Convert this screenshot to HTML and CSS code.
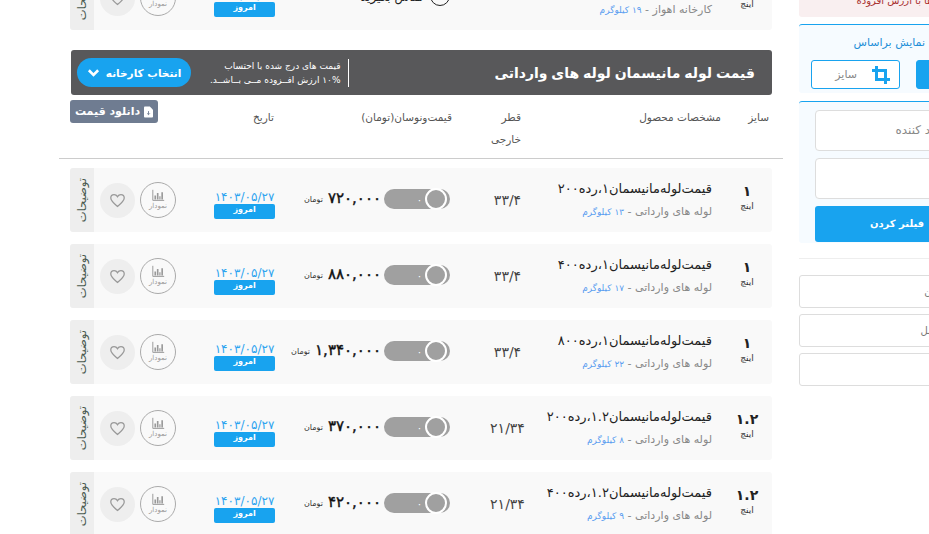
FILE: index.html
```html
<!DOCTYPE html>
<html lang="fa">
<head>
  <meta charset="UTF-8">
  <meta name="viewport" content="width=device-width, initial-scale=1.0">
  <title>قیمت لوله مانیسمان</title>
  <link rel="stylesheet" href="styles.css">
</head>
<body>

<svg class="defs" width="0" height="0">
  <symbol id="bars" viewBox="0 0 16 16">
    <path d="M1 1v13h14" fill="none" stroke="currentColor" stroke-width="1.2"/>
    <path d="M3 8h2v5H3zM6 5h2v8H6zM9 9h1.500v4H9zM11.500 4h2v9h-2z" fill="currentColor"/>
  </symbol>
  <symbol id="heart" viewBox="0 0 24 24">
    <path d="M12 20.500C6 15.500 2.500 12.300 2.500 8.500 2.500 5.700 4.600 3.700 7.200 3.700c1.900 0 3.700 1 4.800 2.900 1.100-1.900 2.900-2.900 4.800-2.900 2.600 0 4.700 2 4.700 4.800 0 3.800-3.500 7-9.500 12z" fill="none" stroke="currentColor" stroke-width="1.800"/>
  </symbol>
</svg>

<div class="page">
  <main class="main">

    <div class="row">
      <div class="size"><b>۲</b><small>اینچ</small></div>
      <div class="product"><h3>قیمت لوله مانیسمان ۲، رده ۸۰</h3><p>کارخانه اهواز - <span>۱۹ کیلوگرم</span></p></div>
      <div class="diameter"></div>
      <div class="price-cell"><span class="status-icon"></span><span class="status">تماس بگیرید</span></div>
      <div class="date"><span>۱۴۰۳/۰۵/۲۷</span><em>امروز</em></div>
      <div class="chart"><svg><use href="#bars"/></svg><small>نمودار</small></div>
      <div class="like"><svg><use href="#heart"/></svg></div>
      <div class="notes"><span>توضیحات</span></div>
    </div>

    <section class="banner">
      <h2>قیمت لوله مانیسمان لوله های وارداتی</h2>
      <p>قیمت های درج شده با احتساب<br>۱۰% ارزش افــزوده مــی بــاشــد.</p>
      <button class="pick" type="button">انتخاب کارخانه
        <svg viewBox="0 0 14 10"><path d="M2 2l5 5 5-5" fill="none" stroke="currentColor" stroke-width="2.800"/></svg>
      </button>
    </section>

    <div class="table-head">
      <div class="head-size">سایز</div>
      <div class="head-product">مشخصات محصول</div>
      <div class="head-diameter">قطر<br>خارجی</div>
      <div class="head-price">قیمت‌ونوسان(تومان)</div>
      <div class="head-date">تاریخ</div>
      <button class="download" type="button">
        <svg viewBox="0 0 10 12"><path d="M0 1a1 1 0 0 1 1-1h5.500L10 3.500V11a1 1 0 0 1-1 1H1a1 1 0 0 1-1-1z" fill="#fff"/><path d="M5 5v4M3.500 7.500L5 9l1.500-1.500" fill="none" stroke="#6f7c91"/></svg>
        <span>دانلود قیمت</span>
      </button>
    </div>

    <div class="row">
      <div class="size"><b>۱</b><small>اینچ</small></div>
      <div class="product"><h3>قیمت‌لوله‌مانیسمان۱،رده۲۰۰</h3><p>لوله های وارداتی - <span>۱۳ کیلوگرم</span></p></div>
      <div class="diameter">۳۳/۴</div>
      <div class="price-cell"><div class="toggle"><i>۰</i></div><strong>۷۲۰,۰۰۰</strong><small>تومان</small></div>
      <div class="date"><span>۱۴۰۳/۰۵/۲۷</span><em>امروز</em></div>
      <div class="chart"><svg><use href="#bars"/></svg><small>نمودار</small></div>
      <div class="like"><svg><use href="#heart"/></svg></div>
      <div class="notes"><span>توضیحات</span></div>
    </div>

    <div class="row">
      <div class="size"><b>۱</b><small>اینچ</small></div>
      <div class="product"><h3>قیمت‌لوله‌مانیسمان۱،رده۴۰۰</h3><p>لوله های وارداتی - <span>۱۷ کیلوگرم</span></p></div>
      <div class="diameter">۳۳/۴</div>
      <div class="price-cell"><div class="toggle"><i>۰</i></div><strong>۸۸۰,۰۰۰</strong><small>تومان</small></div>
      <div class="date"><span>۱۴۰۳/۰۵/۲۷</span><em>امروز</em></div>
      <div class="chart"><svg><use href="#bars"/></svg><small>نمودار</small></div>
      <div class="like"><svg><use href="#heart"/></svg></div>
      <div class="notes"><span>توضیحات</span></div>
    </div>

    <div class="row">
      <div class="size"><b>۱</b><small>اینچ</small></div>
      <div class="product"><h3>قیمت‌لوله‌مانیسمان۱،رده۸۰۰</h3><p>لوله های وارداتی - <span>۲۲ کیلوگرم</span></p></div>
      <div class="diameter">۳۳/۴</div>
      <div class="price-cell"><div class="toggle"><i>۰</i></div><strong>۱,۳۴۰,۰۰۰</strong><small>تومان</small></div>
      <div class="date"><span>۱۴۰۳/۰۵/۲۷</span><em>امروز</em></div>
      <div class="chart"><svg><use href="#bars"/></svg><small>نمودار</small></div>
      <div class="like"><svg><use href="#heart"/></svg></div>
      <div class="notes"><span>توضیحات</span></div>
    </div>

    <div class="row">
      <div class="size"><b>۱.۲</b><small>اینچ</small></div>
      <div class="product"><h3>قیمت‌لوله‌مانیسمان۱.۲،رده۲۰۰</h3><p>لوله های وارداتی - <span>۸ کیلوگرم</span></p></div>
      <div class="diameter">۲۱/۳۴</div>
      <div class="price-cell"><div class="toggle"><i>۰</i></div><strong>۳۷۰,۰۰۰</strong><small>تومان</small></div>
      <div class="date"><span>۱۴۰۳/۰۵/۲۷</span><em>امروز</em></div>
      <div class="chart"><svg><use href="#bars"/></svg><small>نمودار</small></div>
      <div class="like"><svg><use href="#heart"/></svg></div>
      <div class="notes"><span>توضیحات</span></div>
    </div>

    <div class="row">
      <div class="size"><b>۱.۲</b><small>اینچ</small></div>
      <div class="product"><h3>قیمت‌لوله‌مانیسمان۱.۲،رده۴۰۰</h3><p>لوله های وارداتی - <span>۹ کیلوگرم</span></p></div>
      <div class="diameter">۲۱/۳۴</div>
      <div class="price-cell"><div class="toggle"><i>۰</i></div><strong>۴۲۰,۰۰۰</strong><small>تومان</small></div>
      <div class="date"><span>۱۴۰۳/۰۵/۲۷</span><em>امروز</em></div>
      <div class="chart"><svg><use href="#bars"/></svg><small>نمودار</small></div>
      <div class="like"><svg><use href="#heart"/></svg></div>
      <div class="notes"><span>توضیحات</span></div>
    </div>

  </main>

  <aside class="side">
    <div class="notice">قیمت ها با ارزش افزوده</div>

    <div class="box view-box">
      <h4>نمایش براساس</h4>
      <div class="view-buttons">
        <button class="view-btn active" type="button">کارخانه</button>
        <button class="view-btn" type="button">
          <svg viewBox="0 0 18 18"><path d="M4.500 0v13.500H18M0 4.500h13.500V18" fill="none" stroke="currentColor" stroke-width="3"/></svg>
          سایز
        </button>
      </div>
    </div>

    <div class="box filter-box">
      <div class="field">تولید کننده</div>
      <div class="field"></div>
      <button class="filter-btn" type="button">فیلتر کردن</button>
    </div>

    <hr class="side-line">

    <div class="plain-field">جنس آهن</div>
    <div class="plain-field">شیوه حمل</div>
    <div class="plain-field"></div>
  </aside>
</div>

</body>
</html>
```

FILE: styles.css
```css
* {
  box-sizing: border-box;
}
html, body {
  margin: 0;
  height: 534px;
  overflow: hidden;
  background: #fff;
}
body {
  font-family: 'DejaVu Sans', sans-serif;
  color: #333;
}
.defs {
  display: block;
  height: 0;
}
.page {
  display: flex;
  align-items: flex-start;
  margin-top: -34px;
  padding-left: 59px;
  width: 1100px;
}

/* main column */
.main {
  width: 724px;
  padding: 0 11px;
  flex-shrink: 0;
}
.row {
  direction: rtl;
  display: flex;
  align-items: center;
  height: 64px;
  margin-bottom: 12px;
  background: #f9f9f9;
  border-radius: 3px;
  overflow: hidden;
}
.row > div {
  flex-shrink: 0;
}
.size {
  width: 50px;
  padding-bottom: 7px;
  text-align: center;
}
.size b {
  display: block;
  font-size: 14px;
  line-height: 19px;
  font-weight: bold;
  color: #222;
}
.size small {
  display: block;
  font-size: 9px;
  line-height: 11px;
}
.product {
  width: 182px;
  padding-right: 10px;
}
.product h3 {
  margin: 0 0 5px;
  font-size: 13px;
  line-height: 19px;
  font-weight: normal;
  color: #222;
  white-space: nowrap;
}
.product p {
  margin: 0;
  font-size: 11px;
  line-height: 18px;
  color: #888;
  white-space: nowrap;
}
.product p span {
  font-size: 9px;
  color: #5a9df0;
}
.diameter {
  width: 65px;
  font-size: 14px;
  text-align: center;
  color: #444;
}
.price-cell {
  display: flex;
  align-items: center;
  width: 185px;
  padding-right: 25px;
  padding-bottom: 2px;
}
.toggle {
  display: flex;
  align-items: center;
  width: 66px;
  height: 20px;
  padding: 0 3px;
  border-radius: 10px;
  background: #a0a0a0;
  flex-shrink: 0;
}
.toggle::before {
  content: "";
  width: 18px;
  height: 18px;
  border: 2.500px solid #fff;
  border-radius: 50%;
  background: #a0a0a0;
}
.toggle i {
  margin-right: 3px;
  font-style: normal;
  font-size: 10px;
  color: #fff;
}
.price-cell strong {
  margin: 0 3px 3px 0;
  font-size: 15px;
  font-weight: normal;
  -webkit-text-stroke: 0.4px #111;
  color: #111;
  direction: ltr;
  white-space: nowrap;
}
.price-cell small {
  margin-right: 5px;
  font-size: 8px;
  white-space: nowrap;
}
.status {
  margin-right: 7px;
  font-size: 12px;
  color: #222;
  white-space: nowrap;
}
.status-icon {
  width: 20px;
  height: 20px;
  margin-bottom: 2px;
  border: 1px solid #222;
  border-radius: 50%;
  flex-shrink: 0;
}
.date {
  width: 76px;
  padding: 8px 15px 0 0;
}
.date span {
  display: block;
  width: 61px;
  font-size: 12px;
  line-height: 14px;
  text-align: center;
  color: #2ea4f0;
  white-space: nowrap;
}
.date em {
  display: block;
  width: 61px;
  height: 15px;
  font-style: normal;
  font-size: 8px;
  font-weight: bold;
  line-height: 12px;
  text-align: center;
  color: #fff;
  background: #18a3ef;
  border-radius: 2px;
}
.chart {
  display: flex;
  flex-direction: column;
  align-items: center;
  justify-content: center;
  width: 36px;
  height: 36px;
  margin-right: 38px;
  border: 1px solid #aaa;
  border-radius: 50%;
  color: #999;
}
.chart svg {
  width: 15px;
  height: 13px;
}
.chart small {
  font-size: 7px;
  line-height: 9px;
}
.like {
  display: flex;
  align-items: center;
  justify-content: center;
  width: 35px;
  height: 35px;
  margin-right: 5px;
  border-radius: 50%;
  background: #eee;
  color: #999;
}
.like svg {
  width: 17px;
  height: 17px;
}
.notes {
  display: flex;
  align-items: center;
  justify-content: center;
  width: 24px;
  height: 64px;
  margin-right: 6px;
  background: #eee;
}
.notes span {
  writing-mode: vertical-rl;
  transform: rotate(180deg);
  font-size: 11.500px;
  color: #4a5a50;
  white-space: nowrap;
}

/* banner */
.banner {
  direction: rtl;
  display: flex;
  align-items: center;
  height: 45px;
  margin: 20px 0 0 1px;
  padding: 0 17px 0 6px;
  background: #58585a;
  border-radius: 3px;
  color: #fff;
}
.banner h2 {
  flex: 1;
  margin: 0;
  font-size: 14px;
  word-spacing: -1px;
  font-weight: bold;
}
.banner p {
  margin: 0;
  padding-right: 8px;
  border-right: 1px solid #fff;
  font-size: 9px;
  line-height: 14px;
  white-space: nowrap;
}
.pick {
  display: flex;
  align-items: center;
  justify-content: center;
  gap: 6px;
  width: 114px;
  height: 29px;
  margin-right: 19px;
  border: none;
  border-radius: 15px;
  background: #18a3ef;
  color: #fff;
  font-family: inherit;
  font-size: 10.500px;
  font-weight: bold;
}
.pick svg {
  width: 13px;
  height: 10px;
}

/* table header */
.table-head {
  direction: rtl;
  display: flex;
  height: 64px;
  margin: 0 -11px 9px;
  padding: 9px 11px 0;
  border-bottom: 1px solid #ccc;
  font-size: 10.500px;
  line-height: 22px;
  color: #555;
}
.table-head > div {
  padding-top: 2px;
  white-space: nowrap;
}
.head-size {
  width: 51px;
  padding-right: 3px;
}
.head-product {
  width: 200px;
}
.head-diameter {
  width: 69px;
}
.head-price {
  width: 178px;
}
.head-date {
  width: 116px;
}
.download {
  display: flex;
  align-items: center;
  justify-content: center;
  gap: 4px;
  width: 88px;
  height: 23px;
  margin-top: -4px;
  padding: 0;
  border: none;
  border-radius: 3px;
  background: #6f7c91;
  color: #fff;
  font-family: inherit;
  font-size: 11px;
  font-weight: bold;
  white-space: nowrap;
}
.download svg {
  width: 9px;
  height: 12px;
}

/* sidebar */
.side {
  direction: rtl;
  width: 180px;
  margin-left: 16px;
  flex-shrink: 0;
}
.notice {
  height: 51px;
  padding: 29px 20px 0 0;
  background: #f9eff0;
  border-radius: 3px;
  font-size: 10px;
  line-height: 12px;
  color: #a33;
}
.box {
  background: #f6fbff;
  border-top: 1px solid #18a3ef;
  border-radius: 3px;
}
.view-box {
  height: 69px;
  margin-top: 7px;
}
.view-box h4 {
  margin: 11px 54px 0 0;
  font-size: 11px;
  line-height: 14px;
  font-weight: normal;
  color: #1f8fd8;
}
.view-buttons {
  display: flex;
  gap: 16px;
  justify-content: flex-end;
  margin: 10px 0 0 12px;
}
.view-btn {
  display: flex;
  align-items: center;
  gap: 15px;
  width: 89px;
  height: 29px;
  padding: 0 9px 0 0;
  border: 1px solid #18a3ef;
  border-radius: 3px;
  background: #fff;
  color: #888;
  font-family: inherit;
  font-size: 11px;
  flex-shrink: 0;
}
.view-btn svg {
  width: 18px;
  height: 18px;
  color: #18a3ef;
}
.view-btn.active {
  background: #18a3ef;
  color: #fff;
}
.filter-box {
  height: 142px;
  margin-top: 8px;
  padding: 8px 0 0 16px;
}
.field {
  height: 41px;
  margin-bottom: 7px;
  padding: 0 30px 0 0;
  border: 1px solid #ddd;
  border-radius: 4px;
  background: #fff;
  font-size: 12px;
  line-height: 39px;
  color: #888;
}
.filter-btn {
  display: block;
  width: 100%;
  height: 36px;
  padding-bottom: 2px;
  border: none;
  border-radius: 3px;
  background: #18a3ef;
  color: #fff;
  font-family: inherit;
  font-size: 10px;
  font-weight: bold;
}
.side-line {
  height: 1px;
  margin: 15px 0 16px;
  border: none;
  background: #eee;
}
.plain-field {
  height: 33px;
  margin-bottom: 6px;
  padding: 0 13px 0 0;
  border: 1px solid #ddd;
  border-radius: 3px;
  font-size: 10px;
  line-height: 31px;
  color: #777;
}
```
